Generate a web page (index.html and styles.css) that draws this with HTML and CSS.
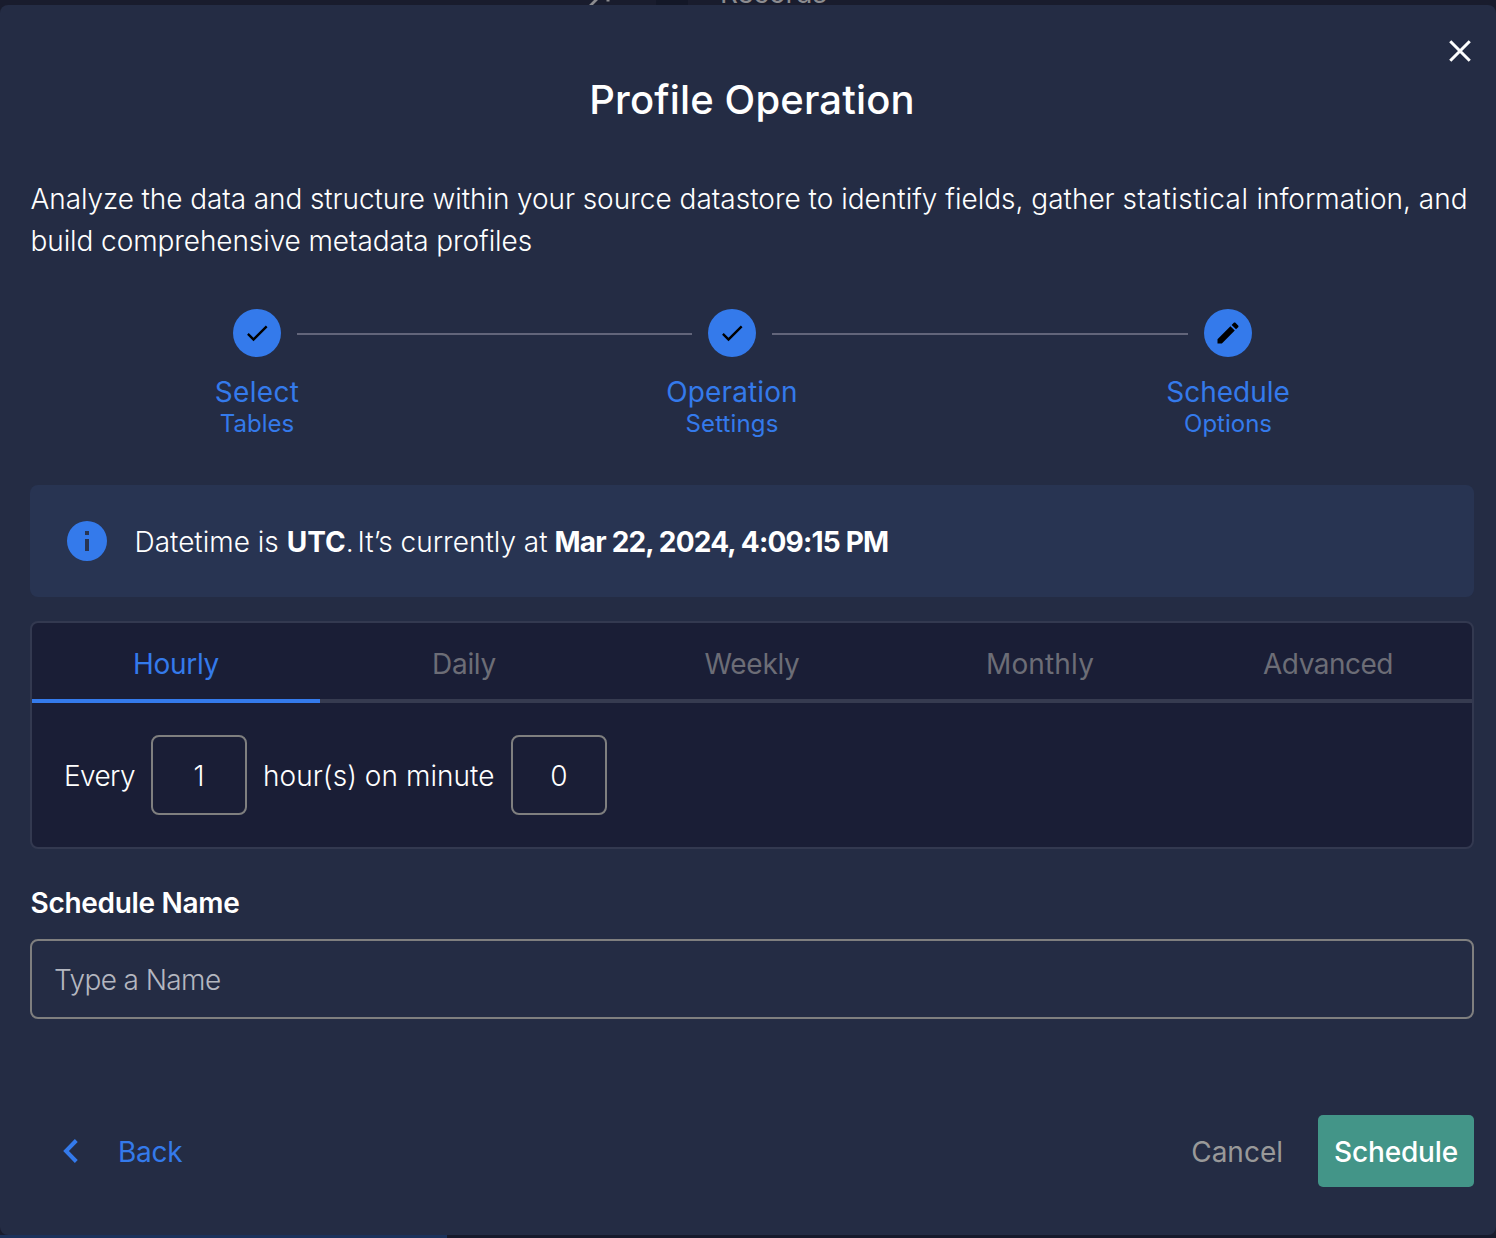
FILE: index.html
```html
<!DOCTYPE html>
<html lang="en">
<head>
<meta charset="utf-8">
<title>Profile Operation</title>
<link rel="stylesheet" href="styles.css">
</head>
<body>
<div class="backdrop" aria-hidden="true">
  <svg class="backdrop-icon" viewBox="0 0 24 5"><path d="M2 6L9.500-1.500M18.500 0h3" fill="none" stroke="currentColor" stroke-width="2.800"/></svg>
  <span class="backdrop-tile"></span>
  <span class="backdrop-text">Records</span>
</div>
<main class="dialog">
  <div class="close-row">
    <button class="close" aria-label="Close"><svg viewBox="0 0 24 24"><path d="M3 3L21 21M21 3L3 21" fill="none" stroke="currentColor" stroke-width="2.8"/></svg></button>
  </div>
  <h1 class="title">Profile Operation</h1>
  <p class="description"><span class="lead">Analyze the data and structure within your </span>source datastore to identify fields, gather <span class="wide">statistical</span> information, and<br><span class="lead">build comprehensive metadata profiles</span></p>

  <div class="stepper">
    <div class="step">
      <span class="step-circle"><svg viewBox="0 0 24 24"><path d="M21 7L9 19l-5.500-5.500 1.410-1.410L9 16.170 19.590 5.590z"/></svg></span>
      <span class="step-name select">Select</span><span class="step-sub">Tables</span>
    </div>
    <span class="step-line first"></span>
    <div class="step">
      <span class="step-circle"><svg viewBox="0 0 24 24"><path d="M21 7L9 19l-5.500-5.500 1.410-1.410L9 16.170 19.590 5.590z"/></svg></span>
      <span class="step-name operation">Operation</span><span class="step-sub settings">Settings</span>
    </div>
    <span class="step-line second"></span>
    <div class="step">
      <span class="step-circle"><svg viewBox="0 0 24 24"><path d="M20.710 7.040c.39-.39.39-1.040 0-1.410l-2.340-2.340c-.37-.39-1.020-.39-1.410 0l-1.840 1.830 3.750 3.750M3 17.250V21h3.750L17.810 9.930l-3.750-3.750z"/></svg></span>
      <span class="step-name">Schedule</span><span class="step-sub">Options</span>
    </div>
  </div>

  <div class="notice">
    <svg viewBox="0 0 24 24"><path d="M13 9h-2V7h2m0 10h-2v-6h2m-1-9A10 10 0 0 0 2 12a10 10 0 0 0 10 10 10 10 0 0 0 10-10A10 10 0 0 0 12 2z"/></svg>
    <p>Datetime is <b>UTC</b><span class="between">. </span>It’s currently at<span class="before-time"> </span><b class="time">Mar 22, 2024, 4:09:15 PM</b></p>
  </div>

  <section class="cron">
    <nav class="tabs">
      <a class="tab active">Hourly</a><a class="tab daily">Daily</a><a class="tab weekly">Weekly</a><a class="tab monthly">Monthly</a><a class="tab advanced">Advanced</a>
    </nav>
    <div class="cron-row">
      <span class="every">Every</span><span class="number one">1</span><span class="hours">hour(s) on minute</span><span class="number">0</span>
    </div>
  </section>

  <label class="field-label" for="schedule-name">Schedule Name</label>
  <input class="field" id="schedule-name" placeholder="Type a Name">

  <footer class="actions">
    <button class="back"><svg viewBox="0 0 40 40"><path d="M26.300 9.500L16 20l10.300 10.500" fill="none" stroke="currentColor" stroke-width="4"/></svg><span>Back</span></button>
    <button class="cancel">Cancel</button>
    <button class="submit">Schedule</button>
  </footer>
</main>
<div class="bottom-strip" aria-hidden="true"><span></span></div>
</body>
</html>
```
FILE: styles.css
```css
* { box-sizing: border-box; }
body {
  margin: 0;
  height: 1238px;
  overflow: hidden;
  background: #191c2d;
  color: #fff;
  font: 300 28px/42px Inter, "Open Sans", sans-serif;
}
svg { display: block; fill: currentColor; flex: none; }
p, h1 { margin: 0; }
button { border: 0; padding: 0; background: none; color: inherit; font: inherit; }

.backdrop { height: 5px; overflow: hidden; display: flex; align-items: flex-end; color: #8c8c90; }
.backdrop-icon { width: 24px; height: 5px; margin-left: 588px; }
.backdrop-tile { width: 32px; height: 5px; margin-left: 44px; background: #131727; }
.backdrop-text { margin: 0 0 -8px 32px; font-weight: 400; line-height: 40px; letter-spacing: -.3px; }

.dialog {
  height: 1230px;
  padding: 30px 22px 0 30px;
  display: flex;
  flex-direction: column;
  background: #242c44;
  border-radius: 8px;
}
.close-row { display: flex; justify-content: flex-end; height: 33px; }
.close { width: 32px; height: 32px; padding: 3px; margin-right: -1.5px; }
.close svg { width: 26px; height: 26px; }
.title { height: 64px; line-height: 64px; font-size: 40px; font-weight: 500; text-align: center; letter-spacing: .15px; }
.description { margin-top: 46px; height: 84px; padding-left: .5px; white-space: nowrap; }
.lead { letter-spacing: -.09px; }
.wide { letter-spacing: .5px; }

.stepper { display: flex; gap: 16px; margin-top: 47px; height: 129px; padding: 0 222px 0 203px; color: #347aeb; }
.step { width: 48px; display: flex; flex-direction: column; align-items: center; white-space: nowrap; }
.step-circle { flex: none; width: 48px; height: 48px; border-radius: 50%; background: #347aeb; color: #000; display: grid; place-items: center; }
.step-circle svg { width: 28px; height: 28px; }
.step-line { height: 2px; margin-top: 24px; background: #62657a; }
.first { flex: 395; }
.second { flex: 416; }
.step-name { font-weight: 400; line-height: 34px; margin-top: 18px; }
.step-sub { font-weight: 400; font-size: 24px; line-height: 30px; }
.select { letter-spacing: .3px; }
.operation, .settings { letter-spacing: .12px; }

.notice { margin-top: 47px; height: 112px; padding-left: 32.5px; display: flex; align-items: center; gap: 24px; background: #283452; border-radius: 8px; color: #347aeb; }
.notice svg { width: 48px; height: 48px; }
.notice p { color: #fff; white-space: pre; padding-top: 2px; }
.notice b { font-weight: 700; }
.notice .between { letter-spacing: -2px; }
.notice .before-time { letter-spacing: -1px; }
.notice .time { letter-spacing: -.8px; }

.cron { margin-top: 24px; height: 228px; border: 2px solid #333950; border-radius: 8px; background: #1a1e36; }
.tabs { display: flex; height: 80px; color: #6c6d76; }
.tab { flex: 1; font-weight: 400; line-height: 82px; height: 80px; text-align: center; box-shadow: inset 0 -4px #363b50; letter-spacing: -.3px; }
.tab.active { color: #347aeb; box-shadow: inset 0 -4px #347aeb; }
.tab.monthly { letter-spacing: .15px; }
.tab.advanced { letter-spacing: -.5px; }
.cron-row { display: flex; align-items: center; padding: 32px 32px 0; white-space: nowrap; }
.every { width: 87px; padding-top: 2px; letter-spacing: -.6px; }
.hours { width: 248px; margin-left: 16px; padding-top: 2px; letter-spacing: .05px; }
.number { width: 96px; height: 80px; border: 2px solid #7f7f7f; border-radius: 8px; line-height: 78px; text-align: center; }

.field-label { margin-top: 32px; height: 44px; line-height: 44px; padding-left: .5px; font-weight: 600; letter-spacing: -.3px; }
.field { margin-top: 14px; width: 100%; height: 80px; padding: 2px 22px 0; border: 2px solid #7f7f7f; border-radius: 8px; background: none; color: #fff; font: inherit; letter-spacing: -.6px; outline: 0; }
.field::placeholder { color: #b4b7c0; opacity: 1; }

.actions { margin-top: 96px; height: 72px; display: flex; align-items: center; }
.back { display: flex; align-items: center; color: #347aeb; font-weight: 400; margin-left: 20px; letter-spacing: -.25px; }
.back svg { width: 40px; height: 40px; margin-right: 28px; }
.back span { padding-top: 2px; }
.cancel { margin-left: auto; margin-right: 35px; padding-top: 2px; color: #999; font-weight: 400; }
.submit { width: 156px; height: 72px; padding-top: 2px; border-radius: 5px; background: #439588; font-weight: 500; letter-spacing: -.15px; }

.bottom-strip { height: 3px; background: #161a2c; }
.bottom-strip span { display: block; width: 447px; height: 3px; background: #1c325b; }
```
